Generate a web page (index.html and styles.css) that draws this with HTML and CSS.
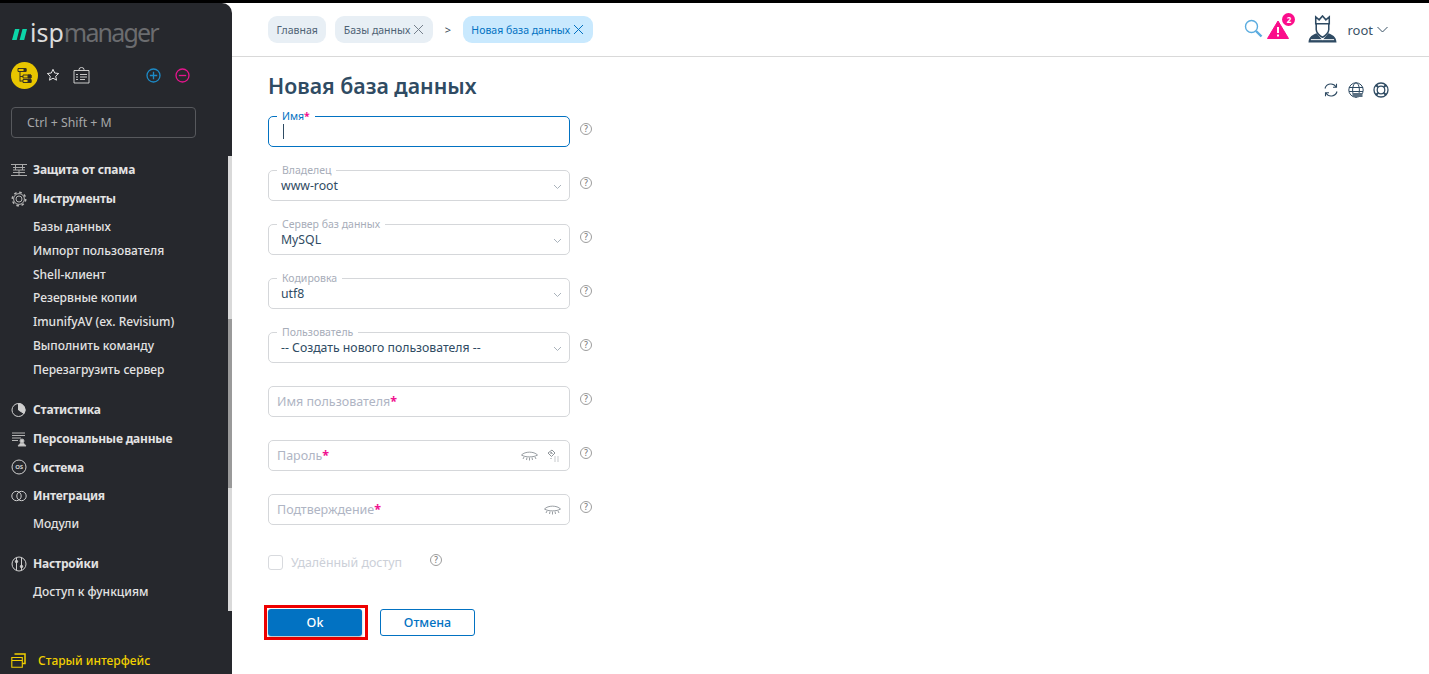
FILE: index.html
```html
<!DOCTYPE html>
<html lang="ru">
<head>
<meta charset="utf-8">
<title>Новая база данных</title>
<link rel="stylesheet" href="styles.css">
</head>
<body>
<div class="topline"></div>
<div class="app">
  <aside class="sidebar">
    <div class="logo">
      <svg class="logo-mark" width="15" height="11" viewBox="0 0 15 11"><path d="M3 0h4.500L4.700 11H0zM10.500 0H15L12.200 11H7.600z" fill="#0cd6a8"/></svg>
      <span class="logo-isp">isp</span><span class="logo-manager">manager</span>
    </div>
    <div class="quick">
      <span class="quick-active">
        <svg width="17" height="17" viewBox="0 0 17 17" fill="none" stroke="#3a3520" stroke-width="1"><path d="M2 1.500h8v3H2zM4 4.500v10M4 9.500h3M4 14h3M7 8h8v3H7zM7 12.500h8v3H7z"/><path d="M8 1.500h2v3H8zM12 8h3v3h-3zM12 12.500h3v3h-3z" fill="#2a2a20"/></svg>
      </span>
      <svg class="q-star" width="14" height="14" viewBox="0 0 14 14" fill="none" stroke="#e4e4e4" stroke-width="1"><path d="M7 1.300l1.700 3.700 4 .5-3 2.700.8 4L7 10.200l-3.500 2 .8-4-3-2.700 4-.5z"/></svg>
      <svg class="q-card" width="17" height="17" viewBox="0 0 17 17" fill="none" stroke="#dcdcdc" stroke-width=".9"><path d="M1 3.500h15v12.500H1zM6 3.500V2.500a2.500 2 0 0 1 5 0v1"/><path d="M3 7.500h2M7 7.500h7M3 10h2M7 10h7M3 12.500h2M7 12.500h5"/></svg>
      <svg class="q-plus" width="15" height="15" viewBox="0 0 15 15" fill="none" stroke="#1d8ac6" stroke-width="1.300"><circle cx="7.500" cy="7.500" r="6.500"/><path d="M3.800 7.500h7.400M7.500 3.800v7.400"/></svg>
      <svg class="q-minus" width="15" height="15" viewBox="0 0 15 15" fill="none" stroke="#e5158d" stroke-width="1.300"><circle cx="7.500" cy="7.500" r="6.500"/><path d="M3.800 7.500h7.400"/></svg>
    </div>
    <div class="search-box">Ctrl + Shift + M</div>
    <nav class="menu">
      <div class="head">
        <svg width="16" height="16" viewBox="0 0 16 16" fill="none" stroke="#a9a9a9"><path d="M0 2.500h16M2 8h12M0 13.500h16M4.500 2.500V8M11.500 2.500V8M8 8v5.500M2 5.500h12M2 10.500h12"/></svg>
        <span>Защита от спама</span>
      </div>
      <div class="head">
        <svg width="16" height="16" viewBox="0 0 16 16" fill="none" stroke="#b5b5b5"><circle cx="8" cy="8" r="3"/><circle cx="8" cy="8" r="5.400"/><circle cx="8" cy="8" r="6.700" stroke-width="1.600" stroke-dasharray="2.600 2.660"/></svg>
        <span>Инструменты</span>
      </div>
      <a class="sub sub-first">Базы данных</a>
      <a class="sub">Импорт пользователя</a>
      <a class="sub">Shell-клиент</a>
      <a class="sub">Резервные копии</a>
      <a class="sub">ImunifyAV (ex. Revisium)</a>
      <a class="sub">Выполнить команду</a>
      <a class="sub">Перезагрузить сервер</a>
      <div class="head group-start">
        <svg width="16" height="16" viewBox="0 0 16 16" fill="none" stroke="#cfcfcf"><circle cx="7.500" cy="8" r="6.500"/><path d="M7.500 1.500A6.500 6.500 0 0 1 13 11.500L7.500 8z" fill="#cfcfcf"/></svg>
        <span>Статистика</span>
      </div>
      <div class="head">
        <svg width="16" height="16" viewBox="0 0 16 16" fill="none" stroke="#b5b5b5"><path d="M1 2h13M1 4.500h13M1 7h9M1 9.500h6"/><circle cx="11" cy="10" r="2" fill="#cfcfcf"/><path d="M7 15l2-2.500h4l2 2.500z" fill="#cfcfcf"/></svg>
        <span>Персональные данные</span>
      </div>
      <div class="head">
        <svg width="16" height="16" viewBox="0 0 16 16" fill="none" stroke="#cfcfcf"><circle cx="8" cy="8" r="7"/><text class="os-text" x="8" y="10.300" text-anchor="middle">OS</text></svg>
        <span>Система</span>
      </div>
      <div class="head">
        <svg width="16" height="16" viewBox="0 0 16 16" fill="none" stroke="#cfcfcf"><circle cx="5.500" cy="8" r="4.700"/><circle cx="10.500" cy="8" r="4.700"/></svg>
        <span>Интеграция</span>
      </div>
      <a class="sub sub-tall">Модули</a>
      <div class="head group-next">
        <svg width="16" height="16" viewBox="0 0 16 16" fill="none" stroke="#cfcfcf"><circle cx="8" cy="8" r="7"/><path d="M5.500 1.500v13M10.500 1.500v13"/><circle cx="5.500" cy="5.500" r="1.200" fill="#cfcfcf"/><circle cx="10.500" cy="10.500" r="1.200" fill="#cfcfcf"/></svg>
        <span>Настройки</span>
      </div>
      <a class="sub sub-tall">Доступ к функциям</a>
    </nav>
    <div class="old-ui">
      <svg width="15" height="15" viewBox="0 0 15 15" fill="none" stroke="#f2d000" stroke-width="1.100"><path d="M.8 4.500h10.500v9.700H.8zM.8 7.500h10.500"/><path d="M3.500 1h10.500v9.500h-2.700" stroke-width="1.500"/></svg>
      <span>Старый интерфейс</span>
    </div>
    <div class="side-scroll"><div class="side-thumb"></div></div>
  </aside>
  <main class="main">
    <header class="topbar">
      <div class="crumbs">
        <span class="chip">Главная</span>
        <span class="chip chip-x">Базы данных
          <svg width="11" height="11" viewBox="0 0 11 11" fill="none" stroke="#75808c"><path d="M1 1l9 9M10 1l-9 9"/></svg>
        </span>
        <span class="crumb-sep">&gt;</span>
        <span class="chip chip-x chip-active">Новая база данных
          <svg width="11" height="11" viewBox="0 0 11 11" fill="none" stroke="#0272c2"><path d="M1 1l9 9M10 1l-9 9"/></svg>
        </span>
      </div>
      <div class="top-tools">
        <svg class="t-search" width="19" height="19" viewBox="0 0 19 19" fill="none" stroke="#5bacdf" stroke-width="1.400"><circle cx="7.500" cy="7.500" r="6"/><path d="M12 12l5.500 5.500" stroke-width="2.400"/></svg>
        <span class="alert">
          <svg width="22" height="19" viewBox="0 0 22 19"><path d="M11 1L21.500 18.500H.500z" fill="#fb0d8b" stroke="#fb0d8b" stroke-linejoin="round"/><path d="M10 7h2v6h-2zM10 14.500h2v2h-2z" fill="#fff"/></svg>
          <span class="alert-badge">2</span>
        </span>
        <svg class="t-user" width="31" height="29" viewBox="0 0 32 30" fill="none" stroke="#2f4b63" stroke-width="1.600"><path d="M9 9V2l3.500 3L16 1l3.500 4L23 2v7zM9.500 9v6c0 3 3.500 7 6.500 8 3-1 6.500-5 6.500-8V9"/><path d="M10 19c-4 1.500-8 3-8.500 9.500h29c-.5-6.500-4.500-8-8.500-9.500l-6 7z" fill="#2f4b63" stroke="none"/><path d="M4 25.500h24" stroke="#fff" stroke-width="1"/></svg>
        <span class="user-name">root</span>
        <svg width="11" height="7" viewBox="0 0 11 7" fill="none" stroke="#3a5266"><path d="M.5 1l5 5 5-5"/></svg>
      </div>
    </header>
    <section class="content">
      <div class="title-row">
        <h1>Новая база данных</h1>
        <div class="page-tools">
          <svg width="16" height="16" viewBox="0 0 16 16" fill="none" stroke="#2f4b63" stroke-width="1.100"><path d="M2 6.500A6 6 0 0 1 13 5M14 9.500A6 6 0 0 1 3 11"/><path d="M13.500 1.800V5.300h-3.500M2.500 14.200v-3.500H6"/></svg>
          <svg width="16" height="16" viewBox="0 0 16 16" fill="none" stroke="#2f4b63"><circle cx="8" cy="8" r="7.200"/><ellipse cx="8" cy="8" rx="3.400" ry="7.200"/><path d="M1 5.500h14M1 9.500h14"/><rect x="4.500" y="11" width="10" height="4" fill="#5b7082" stroke="none"/></svg>
          <svg width="16" height="16" viewBox="0 0 16 16" fill="none" stroke="#2f4b63" stroke-width="1.300"><circle cx="8" cy="8" r="7"/><circle cx="8" cy="8" r="3.800"/><path d="M3 3l2.300 2.300M13 3l-2.300 2.300M3 13l2.300-2.300M13 13l-2.300-2.300" stroke-width="2"/></svg>
        </div>
      </div>
      <form class="form">
        <div class="row">
          <div class="field field-focus">
            <span class="legend legend-focus">Имя<b>*</b></span>
            <span class="caret"></span>
          </div>
          <span class="help">?</span>
        </div>
        <div class="row">
          <div class="field">
            <span class="legend">Владелец</span>
            <span class="value">www-root</span>
            <svg class="chev" width="9" height="6" viewBox="0 0 9 6" fill="none" stroke="#a9b2bb"><path d="M1 1l3.500 3.500L8 1"/></svg>
          </div>
          <span class="help">?</span>
        </div>
        <div class="row">
          <div class="field">
            <span class="legend">Сервер баз данных</span>
            <span class="value">MySQL</span>
            <svg class="chev" width="9" height="6" viewBox="0 0 9 6" fill="none" stroke="#a9b2bb"><path d="M1 1l3.500 3.500L8 1"/></svg>
          </div>
          <span class="help">?</span>
        </div>
        <div class="row">
          <div class="field">
            <span class="legend">Кодировка</span>
            <span class="value">utf8</span>
            <svg class="chev" width="9" height="6" viewBox="0 0 9 6" fill="none" stroke="#a9b2bb"><path d="M1 1l3.500 3.500L8 1"/></svg>
          </div>
          <span class="help">?</span>
        </div>
        <div class="row">
          <div class="field">
            <span class="legend">Пользователь</span>
            <span class="value">-- Создать нового пользователя --</span>
            <svg class="chev" width="9" height="6" viewBox="0 0 9 6" fill="none" stroke="#a9b2bb"><path d="M1 1l3.500 3.500L8 1"/></svg>
          </div>
          <span class="help">?</span>
        </div>
        <div class="row">
          <div class="field">
            <span class="placeholder">Имя пользователя<b>*</b></span>
          </div>
          <span class="help">?</span>
        </div>
        <div class="row">
          <div class="field">
            <span class="placeholder">Пароль<b>*</b></span>
            <svg class="eye" width="17" height="10" viewBox="0 0 17 10" fill="none" stroke="#8d9398" stroke-width=".9"><path d="M.5 4C4 .2 13 .2 16.500 4C13 6.500 4 6.500.5 4zM3 6l-1 2M6 6.500l-.5 2.500M8.500 6.500v3M11 6.500l.5 2.500M14 6l1 2"/></svg>
            <svg class="gen" width="12" height="13" viewBox="0 0 12 13" fill="none" stroke="#8d9398"><path d="M1 4l4-3 3 3-3.500 3.500zM3 4h2M4 3l1.500 2M7.500 8h1M10.500 8h1M7.500 10h1M10.500 10h1M7.500 12h1M10.500 12h1M3.500 9.500h1"/></svg>
          </div>
          <span class="help">?</span>
        </div>
        <div class="row">
          <div class="field">
            <span class="placeholder">Подтверждение<b>*</b></span>
            <svg class="eye eye-last" width="17" height="10" viewBox="0 0 17 10" fill="none" stroke="#8d9398" stroke-width=".9"><path d="M.5 4C4 .2 13 .2 16.500 4C13 6.500 4 6.500.5 4zM3 6l-1 2M6 6.500l-.5 2.500M8.500 6.500v3M11 6.500l.5 2.500M14 6l1 2"/></svg>
          </div>
          <span class="help">?</span>
        </div>
        <div class="check-row">
          <span class="checkbox"></span>
          <span class="check-label">Удалённый доступ</span>
          <span class="help">?</span>
        </div>
        <div class="buttons">
          <span class="ok-mark"><button type="button" class="btn btn-ok">Ok</button></span>
          <button type="button" class="btn btn-cancel">Отмена</button>
        </div>
      </form>
    </section>
  </main>
</div>
</body>
</html>
```

FILE: styles.css
```css
* { box-sizing: border-box; }
html, body { margin: 0; height: 100%; }
body {
  display: flex;
  flex-direction: column;
  height: 674px;
  overflow: hidden;
  background: #fff;
  font-family: "Noto Sans", "Open Sans", sans-serif;
  color: #2f4b63;
}
.topline { height: 3px; flex: none; background: #000; }
.app { flex: 1; display: flex; min-height: 0; }

/* Sidebar */
.sidebar {
  position: relative;
  width: 232px;
  flex: none;
  display: flex;
  flex-direction: column;
  background: #26282d;
  border-top-right-radius: 10px;
  padding: 0 0 0 11px;
  color: #e6e6e6;
}
.logo {
  height: 34px;
  margin-top: 12px;
  display: flex;
  align-items: center;
  font-size: 25px;
  line-height: 34px;
}
.logo-mark { margin: 4px 3px 0 1px; }
.logo-isp { color: #dcdcdc; }
.logo-manager { color: #6b6c6f; letter-spacing: -1.800px; }
.quick {
  display: flex;
  align-items: center;
  height: 28px;
  margin-top: 12px;
}
.quick-active {
  width: 27px;
  height: 27px;
  border-radius: 50%;
  background: #e8c600;
  display: flex;
  align-items: center;
  justify-content: center;
}
.q-star { margin-left: 8px; }
.q-card { margin-left: 13px; }
.q-plus { margin-left: 56px; }
.q-minus { margin-left: 14px; }
.search-box {
  width: 185px;
  height: 31px;
  margin-top: 18px;
  border: 1px solid #57595d;
  border-radius: 4px;
  padding-left: 15px;
  font-size: 12.300px;
  line-height: 29px;
  color: #a6a7a9;
}
.menu {
  display: flex;
  flex-direction: column;
  margin-top: 17.600px;
}
.head {
  display: flex;
  align-items: center;
  gap: 6px;
  height: 28.700px;
  font-size: 12px;
  letter-spacing: -.2px;
  font-weight: 700;
  color: #e3e3e3;
  white-space: nowrap;
}
.head svg { flex: none; }
.sub {
  display: block;
  height: 23.800px;
  line-height: 24px;
  padding-left: 22px;
  font-size: 12px;
  font-weight: 500;
  color: #e3e3e3;
  white-space: nowrap;
}
.sub-first { margin-top: 2px; }
.sub-tall { height: 27px; line-height: 28px; }
.group-start { margin-top: 14px; }
.group-next { margin-top: 12.200px; }
.os-text { font-size: 6px; fill: #cfcfcf; stroke: none; }
.old-ui {
  margin-top: auto;
  height: 28px;
  display: flex;
  align-items: center;
  gap: 12px;
  font-size: 12px;
  font-weight: 500;
  color: #f2d000;
  padding-top: 1px;
}
.side-scroll {
  position: absolute;
  right: 0;
  top: 153px;
  width: 4px;
  height: 455px;
  background: #d9d9d9;
}
.side-thumb {
  margin-top: 163px;
  height: 169px;
  background: #9a9a9a;
}

/* Header */
.main { flex: 1; min-width: 0; display: flex; flex-direction: column; }
.topbar {
  height: 54px;
  flex: none;
  display: flex;
  align-items: center;
  justify-content: space-between;
  border-bottom: 1px solid #d9d9d9;
  padding: 0 41px 0 36px;
}
.crumbs { display: flex; align-items: center; }
.chip {
  height: 27px;
  display: inline-flex;
  align-items: center;
  gap: 3px;
  padding: 0 8.500px;
  border-radius: 9px;
  background: #e8eff5;
  font-size: 10.500px;
  color: #4e6274;
  white-space: nowrap;
}
.chip + .chip { margin-left: 9px; }
.chip-active { background: #c9e9fe; color: #0272c2; }
.crumb-sep {
  width: 30px;
  text-align: center;
  font-size: 11px;
  color: #3a4b5a;
}
.top-tools { display: flex; align-items: center; }
.t-search { margin-top: -3px; }
.alert { position: relative; display: flex; margin-left: 4px; }
.alert-badge {
  position: absolute;
  top: -7px;
  right: -6px;
  width: 13px;
  height: 13px;
  border-radius: 50%;
  background: #fb0d8b;
  color: #fff;
  font-size: 8px;
  font-weight: 700;
  line-height: 13px;
  text-align: center;
}
.t-user { margin-left: 18px; }
.user-name { margin: 0 4px 0 9px; font-size: 13px; color: #3a5266; }

/* Content */
.content { flex: 1; padding: 0 40px 0 36px; }
.title-row {
  display: flex;
  align-items: center;
  justify-content: space-between;
  height: 57px;
  margin-bottom: 2px;
}
h1 {
  margin: 0;
  font-size: 21.300px;
  font-weight: 600;
  color: #2f4b63;
}
.page-tools { display: flex; align-items: center; gap: 9px; margin-top: 9px; }
.form { display: flex; flex-direction: column; }
.row {
  display: flex;
  height: 31px;
  margin-bottom: 23px;
}
.field {
  position: relative;
  width: 302px;
  height: 31px;
  display: flex;
  align-items: center;
  border: 1px solid #d5d7da;
  border-radius: 5px;
  padding: 0 6px 0 12px;
  background: #fff;
}
.field-focus { border-color: #0272c2; }
.legend {
  position: absolute;
  left: 8px;
  top: -8px;
  padding: 0 5px;
  background: #fff;
  font-size: 10.500px;
  line-height: 14px;
  color: #a7adb9;
  white-space: nowrap;
}
.legend-focus { color: #0272c2; }
.legend b, .placeholder b { color: #f0108f; font-weight: 700; }
.caret { width: 1px; height: 15px; margin-left: 2px; background: #2f4b63; }
.value { font-size: 12.250px; color: #2f4b63; white-space: nowrap; }
.chev { position: absolute; right: 7px; top: 13px; }
.placeholder { margin-left: -4px; font-size: 12.500px; color: #afb5c4; }
.eye { margin-left: auto; }
.eye-last { margin-right: 2px; }
.gen { margin: 0 4px 0 9px; }
.help {
  flex: none;
  align-self: flex-start;
  width: 12px;
  height: 12px;
  margin: 7px 0 0 10px;
  border: 1px solid #9d9d9d;
  border-radius: 50%;
  font-size: 8px;
  font-weight: 500;
  line-height: 10px;
  text-align: center;
  color: #777;
}
.check-row {
  display: flex;
  align-items: center;
  height: 16px;
  margin-top: 6px;
}
.checkbox {
  width: 15px;
  height: 15px;
  border: 1px solid #d8dade;
  border-radius: 3px;
}
.check-label {
  margin-left: 8px;
  width: 139px;
  font-size: 12.400px;
  color: #ccd0d8;
}
.check-row .help { margin: 0; }
.buttons {
  display: flex;
  align-items: center;
  margin-top: 35px;
}
.ok-mark {
  display: flex;
  margin-left: -4px;
  border: 3px solid #ee0000;
  padding: 1px 3px 1px 1px;
  margin-right: 12px;
}
.btn {
  width: 95px;
  height: 27px;
  border-radius: 3px;
  font-family: inherit;
  font-size: 12.500px;
  font-weight: 500;
  padding: 0;
}
.btn-ok { width: 94px; border: 0; background: #0272c2; color: #fff; box-shadow: 0 1px 2px rgba(0,0,0,.3); }
.btn-cancel { border: 1px solid #0272c2; background: #fff; color: #0272c2; }
```
